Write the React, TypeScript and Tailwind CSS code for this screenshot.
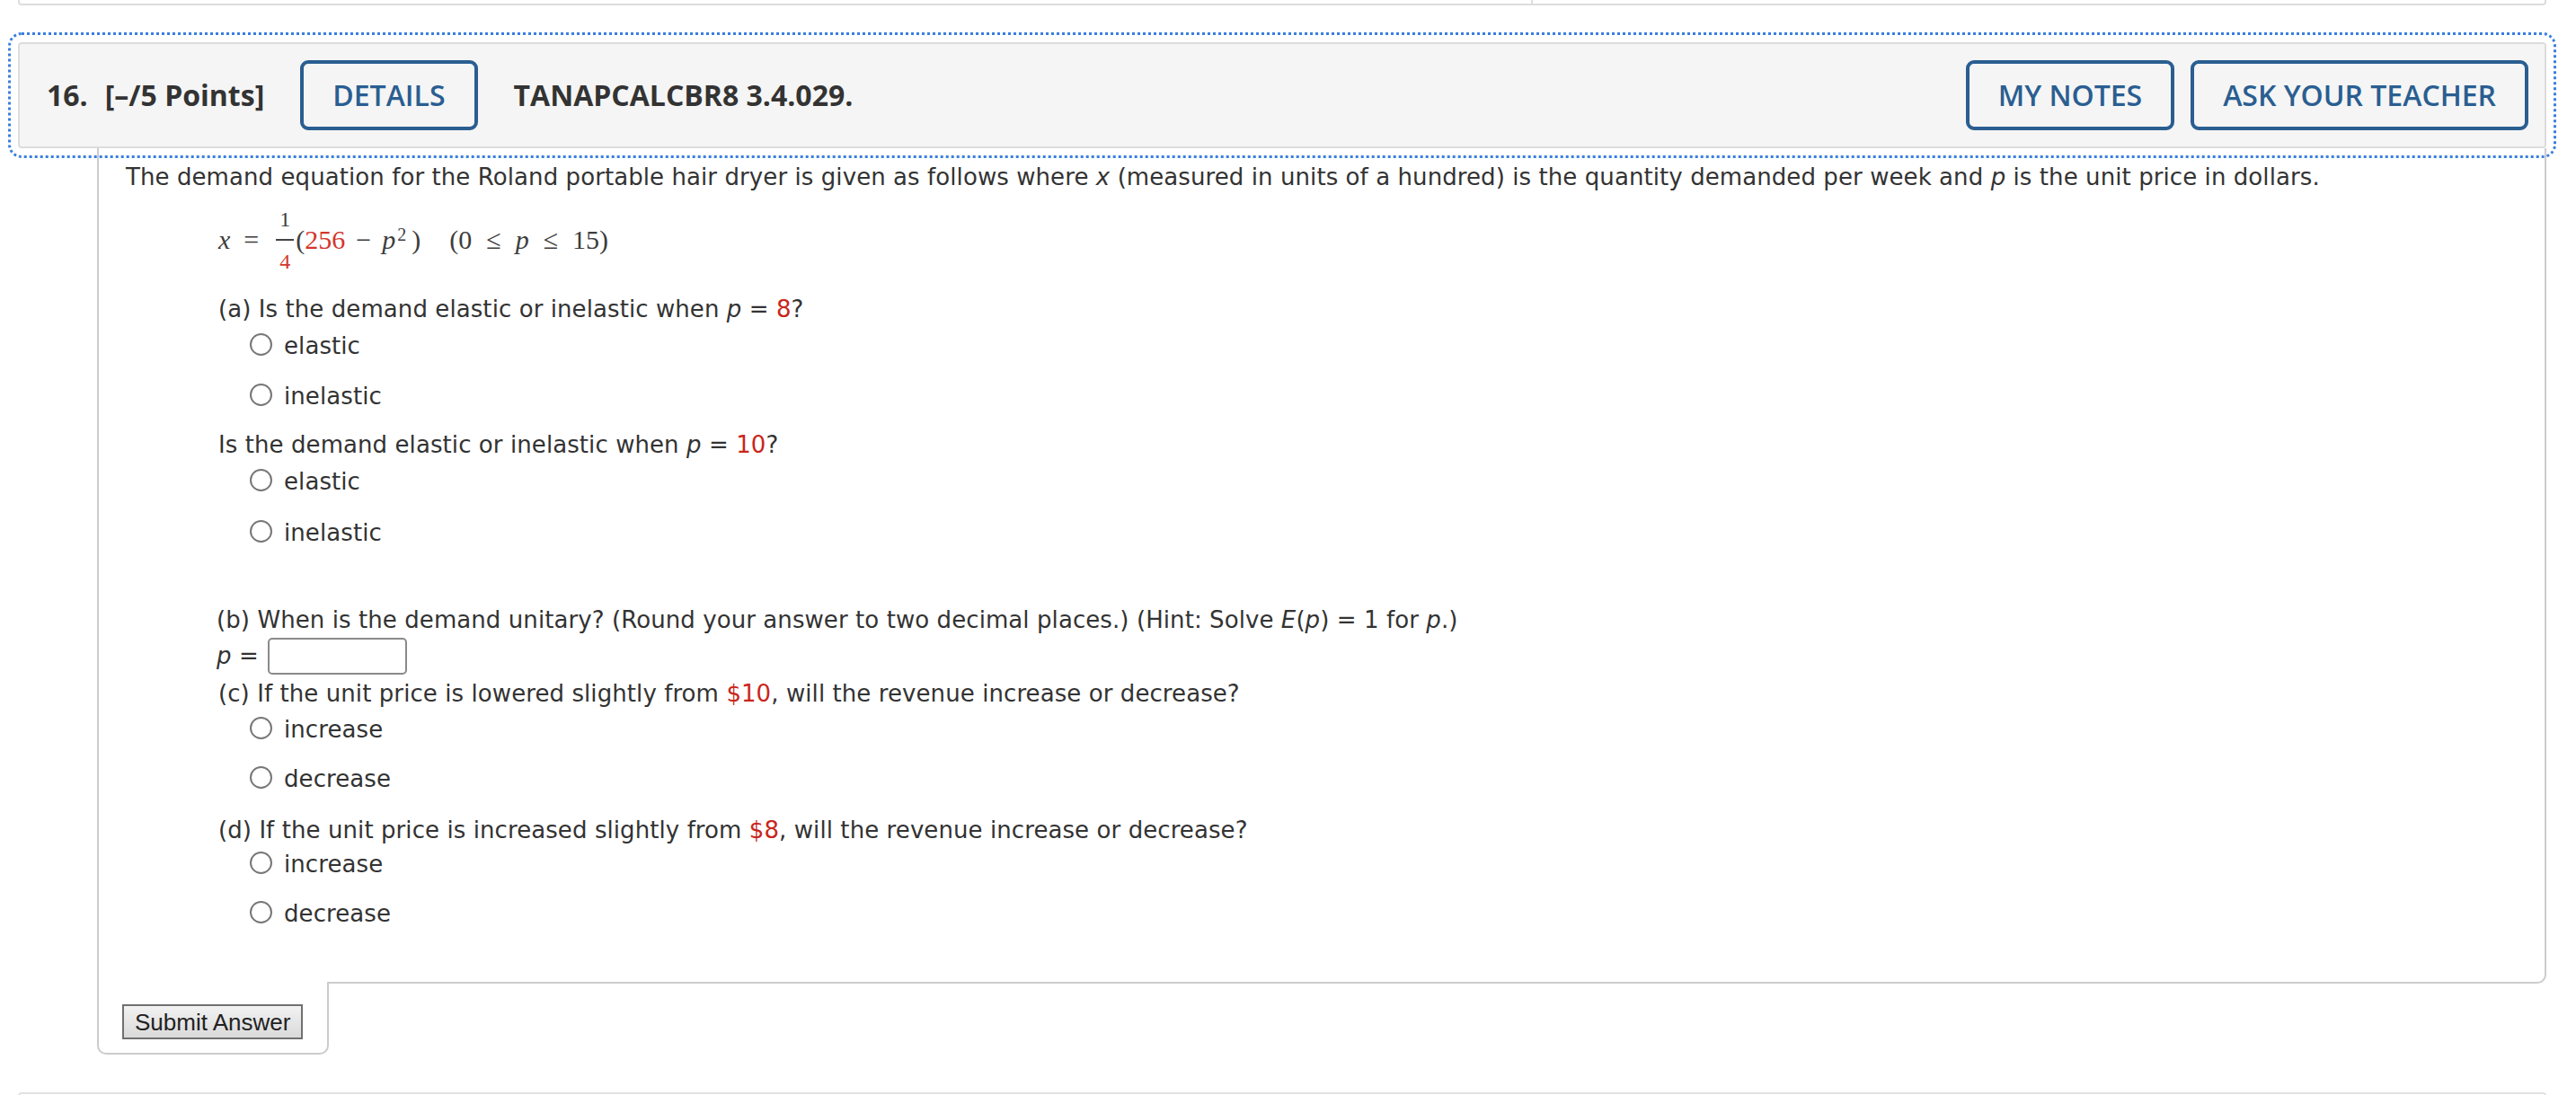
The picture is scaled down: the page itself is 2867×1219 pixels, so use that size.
import type { ReactNode } from 'react'

const RED = 'text-[#c9261b]'
const MATH_RED = 'text-[#d3362c]'

function HeaderButton({ children, className = '' }: { children: ReactNode; className?: string }) {
  return (
    <button
      className={`flex h-[78px] items-center rounded-[9px] border-4 border-[#2a5e91] px-[32px] font-semibold text-[#2a5e91] ${className}`}
    >
      {children}
    </button>
  )
}

function Line({ children, className = '' }: { children: ReactNode; className?: string }) {
  return <div className={`h-[40px] whitespace-nowrap leading-[40px] ${className}`}>{children}</div>
}

function Radio({ label, className = '' }: { label: string; className?: string }) {
  return (
    <div className={`flex h-[40px] items-center pl-[35px] ${className}`}>
      <span className="mb-[3px] h-[25px] w-[25px] shrink-0 rounded-full border-2 border-[#777] bg-white" />
      <span className="ml-[13px] leading-[40px]">{label}</span>
    </div>
  )
}

export default function App() {
  return (
    <div className="min-h-screen bg-white">
      <div className="ml-[20px] w-[2814px]">
        {/* end of the previous question card */}
        <div className="flex h-[6px] rounded-b-[4px] border-x-2 border-b-2 border-[#ddd]">
          <div className="w-[1684px] border-r-2 border-[#ddd]" />
        </div>

        {/* question header */}
        <header className="mt-[41px] flex h-[118px] items-center rounded-[4px] border-2 border-[#ddd] bg-[#f5f5f5] pl-[30px] pr-[18px] font-['Open_Sans',sans-serif] text-[32px] text-[#333] outline-[3px] outline-offset-8 outline-dotted outline-[#3a7ee0]">
          <span className="font-bold">16.</span>
          <span className="ml-[19px] font-bold">[–/5 Points]</span>
          <HeaderButton className="ml-[40px]">DETAILS</HeaderButton>
          <span className="ml-[40px] font-bold">TANAPCALCBR8 3.4.029.</span>
          <HeaderButton className="ml-auto">MY NOTES</HeaderButton>
          <HeaderButton className="ml-[18px]">ASK YOUR TEACHER</HeaderButton>
        </header>

        {/* question body */}
        <div className="ml-[88px] rounded-br-[10px] border-x-2 border-b-2 border-[#ccc] pb-[56px] pl-[30px] pt-[12px] font-['DejaVu_Sans',sans-serif] text-[26px] tracking-[0.08px] text-[#333]">
          <Line>
            The demand equation for the Roland portable hair dryer is given as follows where <i>x</i> (measured in
            units of a hundred) is the quantity demanded per week and <i>p</i> is the unit price in dollars.
          </Line>

          <div className="ml-[103px] mt-[19px] flex h-[62px] items-center font-['Liberation_Serif',serif] text-[30px] leading-none tracking-normal text-[#3d3d3d]">
            <span className="italic">x</span>
            <span className="ml-[15px]">=</span>
            <span className="ml-[19px] inline-flex flex-col items-center text-[24px]">
              <span className="flex h-[30px] items-end pb-[10px]">1</span>
              <span className="h-[2px] w-[20px] bg-[#444]" />
              <span className={`flex h-[30px] items-start pt-[11px] ${MATH_RED}`}>4</span>
            </span>
            <span className="ml-[2px] whitespace-nowrap">
              (<span className={MATH_RED}>256</span>
              <span className="mx-[12px]">−</span>
              <i>p</i>
              <sup className="ml-[2px] -top-[9px] text-[20px]">2</sup>
              <span className="ml-[6px]">)</span>
              <span className="ml-[32px]">(0</span>
              <span className="mx-[16px]">≤</span>
              <i>p</i>
              <span className="mx-[16px]">≤</span>
              15)
            </span>
          </div>

          <div className="ml-[103px]">
            <Line className="mt-[26px]">
              (a) Is the demand elastic or inelastic when <i>p</i> = <span className={RED}>8</span>?
            </Line>
            <Radio label="elastic" className="mt-[1px]" />
            <Radio label="inelastic" className="mt-[16px]" />

            <Line className="mt-[14px]">
              Is the demand elastic or inelastic when <i>p</i> = <span className={RED}>10</span>?
            </Line>
            <Radio label="elastic" className="mt-[1px]" />
            <Radio label="inelastic" className="mt-[17px]" />

            <Line className="mt-[57px] -ml-[2px]">
              (b) When is the demand unitary? (Round your answer to two decimal places.) (Hint: Solve <i>E</i>(
              <i>p</i>) = 1 for <i>p</i>.)
            </Line>
            <div className="-ml-[2px] flex h-[41px] items-center">
              <span className="whitespace-nowrap">
                <i>p</i> =
              </span>
              <input
                type="text"
                className="ml-[10px] h-[41px] w-[155px] rounded-[5px] border-2 border-[#8a8a8a] bg-white"
              />
            </div>

            <Line className="mt-[1px]">
              (c) If the unit price is lowered slightly from <span className={RED}>$10</span>, will the revenue
              increase or decrease?
            </Line>
            <Radio label="increase" />
            <Radio label="decrease" className="mt-[15px]" />

            <Line className="mt-[17px]">
              (d) If the unit price is increased slightly from <span className={RED}>$8</span>, will the revenue
              increase or decrease?
            </Line>
            <Radio label="increase" className="-mt-[2px]" />
            <Radio label="decrease" className="mt-[15px]" />
          </div>
        </div>

        {/* submit tab */}
        <div className="-mt-[2px] ml-[88px] h-[81px] w-[258px] rounded-b-[10px] border-x-2 border-b-2 border-[#ccc] bg-white pl-[26px] pt-[25px]">
          <button className="h-[39px] border-2 border-[#707070] bg-gradient-to-b from-[#f2f2f2] to-[#dadada] px-[12px] font-['Liberation_Sans',Arial,sans-serif] text-[26px] leading-none text-[#222]">
            Submit Answer
          </button>
        </div>

        {/* start of the next question card */}
        <div className="mt-[42px] h-[10px] rounded-t-[4px] border-x-2 border-t-2 border-[#e2e2e2]" />
      </div>
    </div>
  )
}
